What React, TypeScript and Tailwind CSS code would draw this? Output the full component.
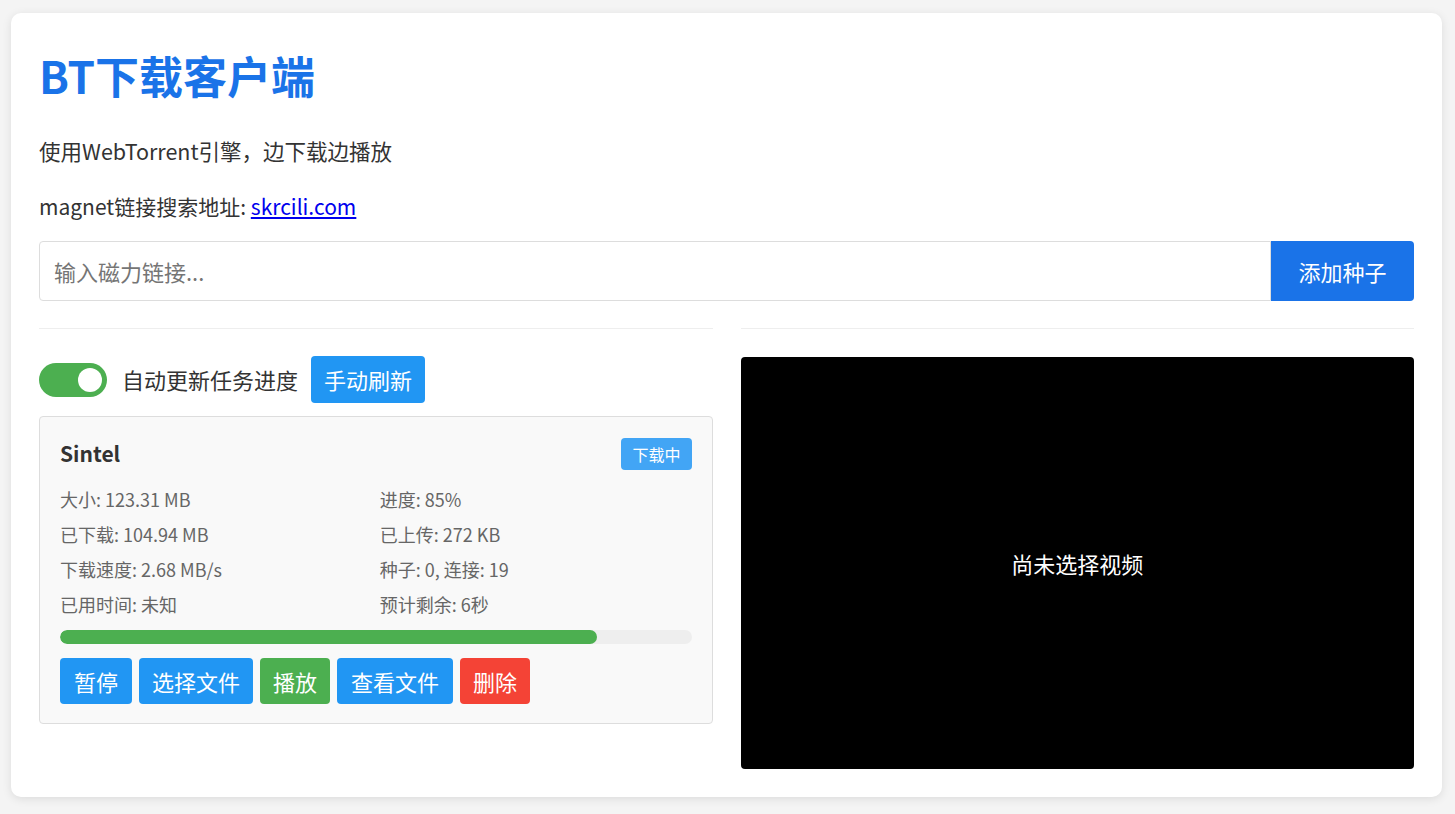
import React, { useState } from 'react';

// BT download client - single torrent view with player panel

const infoRows: [string, string][] = [
  ['大小: 123.31 MB', '进度: 85%'],
  ['已下载: 104.94 MB', '已上传: 272 KB'],
  ['下载速度: 2.68 MB/s', '种子: 0, 连接: 19'],
  ['已用时间: 未知', '预计剩余: 6秒'],
];

const font = "font-['Microsoft_YaHei','Noto_Sans_CJK_SC',sans-serif]";

function Toggle({ on, onChange }: { on: boolean; onChange: () => void }) {
  return (
    <button
      onClick={onChange}
      className={`relative h-[34px] w-[68px] shrink-0 rounded-full ${on ? 'bg-[#4caf50]' : 'bg-[#ccc]'}`}
    >
      <span
        className={`absolute top-[5px] h-[24px] w-[24px] rounded-full bg-white ${on ? 'left-[39px]' : 'left-[5px]'}`}
      />
    </button>
  );
}

export default function App() {
  const [autoRefresh, setAutoRefresh] = useState(true);
  const progress = 85;

  return (
    <div className={`min-h-screen bg-[#f4f4f4] pl-[11px] pr-[13px] pt-[13px] pb-[17px] ${font}`}>
      <div className="rounded-[10px] bg-white p-[28px] shadow-[0_2px_10px_rgba(0,0,0,0.1)]">
        <h1 className="text-[44px] leading-[68px] font-bold text-[#1a73e8]">BT下载客户端</h1>
        <p className="mt-[27px] text-[21.5px] leading-[30px] text-[#333]">使用WebTorrent引擎，边下载边播放</p>
        <p className="mt-[25px] text-[21px] leading-[30px] text-[#333]">
          magnet链接搜索地址:{' '}
          <a href="#" className="text-[#0000ee] underline">
            skrcili.com
          </a>
        </p>

        <div className="mt-[20px] flex h-[60px]">
          <input
            placeholder="输入磁力链接..."
            className="min-w-0 flex-1 rounded-l-[4px] border border-[#ddd] px-[14px] text-[22px] text-[#333] outline-none placeholder:text-[#757575]"
          />
          <button className="w-[143px] rounded-r-[4px] bg-[#1a73e8] text-[22px] text-white">添加种子</button>
        </div>

        <div className="mt-[27px] grid grid-cols-2 gap-[28px]">
          {/* task list */}
          <div className="border-t border-[#eee] pt-[27px]">
            <div className="flex h-[47px] items-center">
              <Toggle on={autoRefresh} onChange={() => setAutoRefresh(!autoRefresh)} />
              <span className="ml-[15px] text-[22px] text-[#333]">自动更新任务进度</span>
              <button className="ml-[13px] h-[47px] rounded-[4px] bg-[#2196f3] px-[13px] text-[22px] text-white">
                手动刷新
              </button>
            </div>

            <div className="mt-[13px] rounded-[4px] border border-[#ddd] bg-[#f9f9f9] px-[20px] pt-[21px] pb-[19px]">
              <div className="flex h-[32px] items-center justify-between">
                <span className="text-[21px] font-bold text-[#333]">Sintel</span>
                <span className="flex h-[32px] items-center rounded-[4px] bg-[#42a5f5] px-[11px] text-[16px] text-white">
                  下载中
                </span>
              </div>

              <div className="mt-[12px] grid grid-cols-2 gap-x-[8px]">
                {infoRows.map(([a, b]) => (
                  <React.Fragment key={a}>
                    <div className="text-[18px] leading-[35px] text-[#666]">{a}</div>
                    <div className="text-[18px] leading-[35px] text-[#666]">{b}</div>
                  </React.Fragment>
                ))}
              </div>

              <div className="mt-[8px] h-[14px] overflow-hidden rounded-[7px] bg-[#eee]">
                <div className="h-full rounded-[7px] bg-[#4caf50]" style={{ width: `${progress}%` }} />
              </div>

              <div className="mt-[14px] flex gap-[7px]">
                <button className="h-[46px] rounded-[4px] bg-[#2196f3] px-[14px] text-[22px] text-white">暂停</button>
                <button className="h-[46px] rounded-[4px] bg-[#2196f3] px-[13px] text-[22px] text-white">选择文件</button>
                <button className="h-[46px] rounded-[4px] bg-[#4caf50] px-[13px] text-[22px] text-white">播放</button>
                <button className="h-[46px] rounded-[4px] bg-[#2196f3] px-[14px] text-[22px] text-white">查看文件</button>
                <button className="h-[46px] rounded-[4px] bg-[#f44336] px-[13px] text-[22px] text-white">删除</button>
              </div>
            </div>
          </div>

          {/* player */}
          <div className="border-t border-[#eee] pt-[28px]">
            <div className="flex h-[412px] items-center justify-center rounded-[4px] bg-black text-[22px] text-white">
              尚未选择视频
            </div>
          </div>
        </div>
      </div>
    </div>
  );
}
